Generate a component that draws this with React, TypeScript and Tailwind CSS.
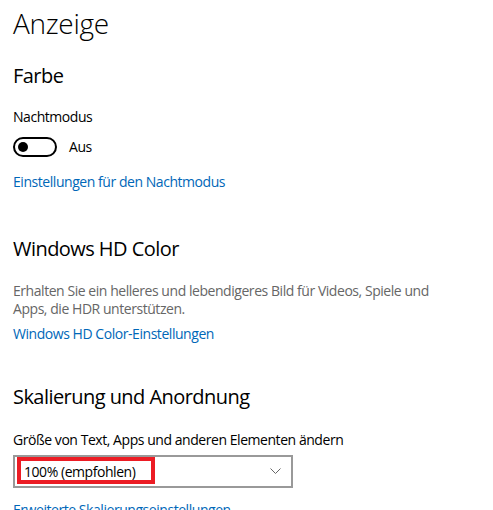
export default function App() {
  return (
    <div
      className="w-[493px] h-[510px] overflow-hidden bg-white pl-[13px] pt-[5px] text-black tracking-[-0.45px]"
      style={{ fontFamily: "'Segoe UI', 'Open Sans', 'Noto Sans', sans-serif" }}
    >
      {/* Page title */}
      <h1 className="text-[28px] leading-[36px] font-light tracking-[-0.3px]">Anzeige</h1>

      {/* Farbe */}
      <h2 className="mt-[21px] text-[20px] leading-[28px] tracking-[-0.55px]">Farbe</h2>
      <div className="mt-[17px] text-[14px] leading-[20px]">Nachtmodus</div>
      <div className="mt-[10px] flex items-center gap-[12px]">
        <div className="flex h-[20px] w-[44px] items-center rounded-full border-2 border-black pl-[3px]">
          <div className="h-[10px] w-[10px] rounded-full bg-black" />
        </div>
        <span className="text-[14px] leading-[20px]">Aus</span>
      </div>
      <a className="mt-[15px] block text-[14px] leading-[20px] text-[#0067b8]">
        Einstellungen für den Nachtmodus
      </a>

      {/* Windows HD Color */}
      <h2 className="mt-[43px] text-[20px] leading-[28px] tracking-[-0.55px]">Windows HD Color</h2>
      <p className="mt-[19px] text-[14px] leading-[18px] text-[#666666]">
        Erhalten Sie ein helleres und lebendigeres Bild für Videos, Spiele und
        <br />
        Apps, die HDR unterstützen.
      </p>
      <a className="mt-[6px] block text-[14px] leading-[20px] text-[#0067b8]">
        Windows HD Color-Einstellungen
      </a>

      {/* Skalierung */}
      <h2 className="mt-[39px] text-[20px] leading-[28px] tracking-[-0.55px]">
        Skalierung und Anordnung
      </h2>
      <div className="mt-[19px] text-[14px] leading-[20px]">
        Größe von Text, Apps und anderen Elementen ändern
      </div>
      <div className="relative mt-[5px] flex h-[33px] w-[280px] items-center justify-between border-2 border-[#999999] pl-[9px] pr-[10px]">
        <span className="text-[14px] leading-[20px]">100% (empfohlen)</span>
        <svg width="11" height="7" viewBox="0 0 11 7" fill="none">
          <path d="M0.5 0.5 L5.5 5.5 L10.5 0.5" stroke="#666666" strokeWidth="1" />
        </svg>
        <div className="pointer-events-none absolute left-[2px] top-[0px] h-[27px] w-[138px] border-4 border-[#ec1c24]" />
      </div>
      <a className="mt-[12px] block text-[14px] leading-[20px] text-[#0067b8]">
        Erweiterte Skalierungseinstellungen
      </a>
    </div>
  );
}
